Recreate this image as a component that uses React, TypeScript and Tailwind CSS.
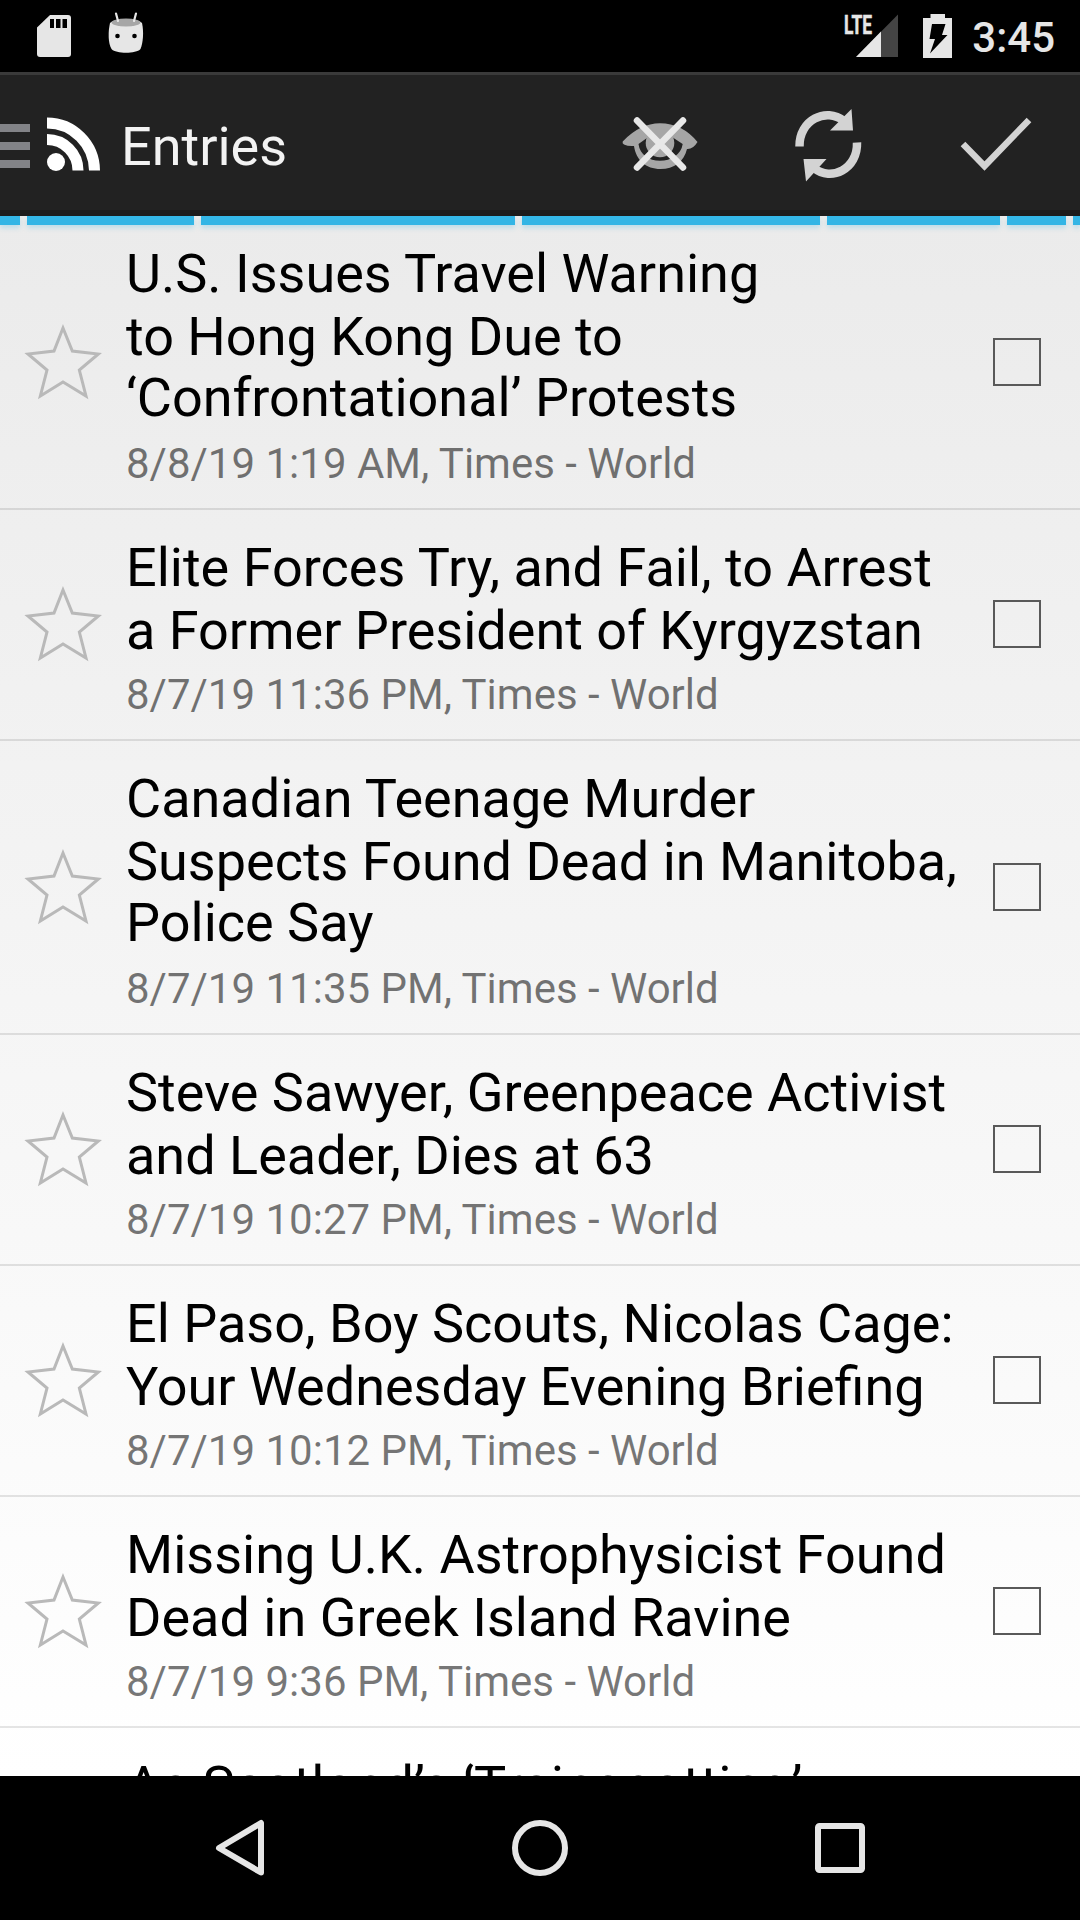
const entries = [
  { lines: ['U.S. Issues Travel Warning', 'to Hong Kong Due to', '‘Confrontational’ Protests'], meta: '8/8/19 1:19 AM, Times - World' },
  { lines: ['Elite Forces Try, and Fail, to Arrest', 'a Former President of Kyrgyzstan'], meta: '8/7/19 11:36 PM, Times - World' },
  { lines: ['Canadian Teenage Murder', 'Suspects Found Dead in Manitoba,', 'Police Say'], meta: '8/7/19 11:35 PM, Times - World' },
  { lines: ['Steve Sawyer, Greenpeace Activist', 'and Leader, Dies at 63'], meta: '8/7/19 10:27 PM, Times - World' },
  { lines: ['El Paso, Boy Scouts, Nicolas Cage:', 'Your Wednesday Evening Briefing'], meta: '8/7/19 10:12 PM, Times - World' },
  { lines: ['Missing U.K. Astrophysicist Found', 'Dead in Greek Island Ravine'], meta: '8/7/19 9:36 PM, Times - World' },
];

const segments = ['w-5', 'w-[167px]', 'w-[314px]', 'w-[298px]', 'w-[173px]', 'w-[59px]', 'w-[7px]'];

function StatusBar() {
  return (
    <div className="flex h-[72px] shrink-0 items-start bg-black">
      <svg className="ml-[37px] mt-[15px] h-[42px] w-[34px]" viewBox="0 0 34 42">
        <path d="M13 0H31a3 3 0 0 1 3 3V39a3 3 0 0 1-3 3H3a3 3 0 0 1-3-3V12.500Z" fill="#e6e6e6" />
        <path d="M13 4h4v9h-4zM19 4h4.500v9H19zM25.500 4H30v9h-4.500z" fill="#000" />
      </svg>
      <svg className="ml-[37px] mt-[12px] h-[42px] w-[36px]" viewBox="0 0 36 42">
        <path d="M2 11C8 6 28 6 34 11C36 20 35 31 32.500 37C28 42 8 42 3.500 37C0 31 0 20 2 11Z" fill="#e6e6e6" />
        <ellipse cx="18" cy="10.500" rx="14.500" ry="4" fill="#a6a6a6" />
        <path d="M8 1.500L10 9M28 1.500L26 9" stroke="#e6e6e6" strokeWidth="2.200" strokeLinecap="round" />
        <circle cx="9.500" cy="24" r="2.300" />
        <circle cx="26.500" cy="24" r="2.300" />
      </svg>
      <div className="ml-auto flex">
        <svg className="mt-[14px] h-[44px] w-[54px] overflow-visible" viewBox="0 0 54 44">
          <path d="M54 .500V43H12Z" fill="#444" />
          <path d="M37 17.500V43H12Z" fill="#e6e6e6" />
          <text x="0" y="19.500" fill="#e6e6e6" stroke="#e6e6e6" strokeWidth="0.500" fontFamily="Roboto" fontWeight="700" fontSize="26" textLength="28" lengthAdjust="spacingAndGlyphs">LTE</text>
        </svg>
        <svg className="ml-[25px] mt-[14px] h-[44px] w-[29px]" viewBox="0 0 29 44">
          <path d="M7.500 0H22V4H29V44H0V4H7.500Z" fill="#e6e6e6" />
          <path d="M9 10H22.500L19 21H24.500L7 39.500L12 25H6.500Z" fill="#000" />
        </svg>
        <div className="ml-[20px] mr-[25px] mt-[13px] text-[42px] leading-[49px] font-medium text-[#e6e6e6]">3:45</div>
      </div>
    </div>
  );
}

function ActionBar() {
  return (
    <div className="flex h-[144px] shrink-0 items-center border-t-[3px] border-b-[6px] border-t-[#3a3a3a] border-b-[#1b1b1b] bg-[#222]">
      <div className="mt-1.5 flex w-[30px] flex-col gap-[10px]">
        <div className="h-2 bg-[#828387]" />
        <div className="h-2 bg-[#828387]" />
        <div className="h-2 bg-[#828387]" />
      </div>
      <svg className="ml-[17px] mt-[2px] h-[54px] w-[53px]" viewBox="0 0 53 54">
        <circle cx="9" cy="45" r="9" fill="#fff" />
        <path d="M0 22.500A31 31 0 0 1 31 53.500M0 6A47.500 48 0 0 1 47.500 53.500" fill="none" stroke="#fff" strokeWidth="11" />
      </svg>
      <div className="ml-[21px] mt-[7px] text-[54px] leading-[63px] text-[#f3f3f3]">Entries</div>
      <div className="ml-auto mt-[4px] flex">
        <svg className="h-[100px] w-[168px]" viewBox="576 95 168 100">
          <path d="M622.700 141.500Q640 123.300 660 123.300Q682 123.300 697.500 142Q693 149.500 687 149C684 162 674 169 660.500 169C646 169 636 160 634 146Q628 146.500 624 144.500Q622 143.500 622.700 141.500ZM649 136.500L638.500 144C640 155 649 160.700 660 160.700C671 160.700 681 155 682.700 144L672 137Z" fill="#a6a6a6" fillRule="evenodd" />
          <circle cx="660" cy="143" r="14.300" fill="#a6a6a6" />
          <path d="M637 120.500L683 167.500M683 120.500L637 167.500" stroke="#e8e8e8" strokeWidth="6.500" strokeLinecap="round" />
        </svg>
        <svg className="h-[100px] w-[168px]" viewBox="744 95 168 100" fill="none">
          <path d="M799.500 146.500C799 120 826 107 844 121M857 142.500C858 169 831 182 814 168" stroke="#d3d3d3" strokeWidth="8.500" />
          <path d="M851.500 109L853 130.500H830ZM803.500 159H826.500L806 181.500Z" fill="#d3d3d3" />
        </svg>
        <svg className="h-[100px] w-[168px]" viewBox="912 95 168 100" fill="none">
          <path d="M963 144L984.500 166L1029 120" stroke="#d3d3d3" strokeWidth="6.500" />
        </svg>
      </div>
    </div>
  );
}

function Entry({ lines, meta }: { lines: string[]; meta: string }) {
  const tall = lines.length === 3;
  return (
    <div className={`flex shrink-0 items-center border-b-2 border-black/10 ${tall ? 'h-[294px]' : 'h-[231px]'}`}>
      <svg className={`ml-[20px] h-[84px] w-[86px] shrink-0 ${tall ? 'mt-[2px]' : 'mt-px'}`} viewBox="60 305 258 252" fill="none">
        <path d="M189 326L217 395L295 404L238 452L258 530L189 488L121 530L141 452L84 404L162 395Z" stroke="#b9b9b9" strokeWidth="9" />
      </svg>
      <div className="ml-[20px] flex h-full grow flex-col pt-[26px] whitespace-nowrap">
        {lines.map((line, i) => (
          <div key={line} className={`text-[54px] text-black ${i === 2 ? 'h-[61px] leading-[59px]' : 'h-[63px] leading-[63px]'}`}>{line}</div>
        ))}
        <div className={`text-[42px] leading-[49px] text-black/54 ${tall ? 'mt-[10px]' : 'mt-[8px]'}`}>{meta}</div>
      </div>
      <div className={`mr-[39px] size-12 shrink-0 border-2 border-[#595959] ${tall ? '' : 'mb-px'}`} />
    </div>
  );
}

export default function App() {
  return (
    <div className="flex h-[1920px] w-[1080px] flex-col overflow-hidden bg-black font-['Roboto',sans-serif]">
      <StatusBar />
      <ActionBar />
      <div className="relative flex h-[1560px] shrink-0 flex-col overflow-hidden bg-linear-to-b from-[#ebebeb] to-white">
        <div className="absolute inset-x-0 top-0 flex gap-[7px]">
          {segments.map((width) => (
            <div key={width} className={`h-[9px] shrink-0 bg-[#33b5e5] shadow-[0_3px_5px_#33b5e540] ${width}`} />
          ))}
        </div>
        {entries.map((entry) => (
          <Entry key={entry.meta} {...entry} />
        ))}
        <div className="ml-[126px] pt-[26px] text-[54px] leading-[63px] whitespace-nowrap text-black">As Scotland’s ‘Trainspotting’</div>
      </div>
      <div className="flex h-36 shrink-0 items-center justify-center bg-black">
        <svg className="h-36 w-[900px]" viewBox="90 1776 900 144" fill="none" stroke="#e6e6e6" strokeWidth="6" strokeLinejoin="round">
          <path d="M261 1823V1872.500L219 1848Z" />
          <circle cx="540" cy="1848" r="25" />
          <rect x="818" y="1826" width="44" height="44" rx="1.500" />
        </svg>
      </div>
    </div>
  );
}
